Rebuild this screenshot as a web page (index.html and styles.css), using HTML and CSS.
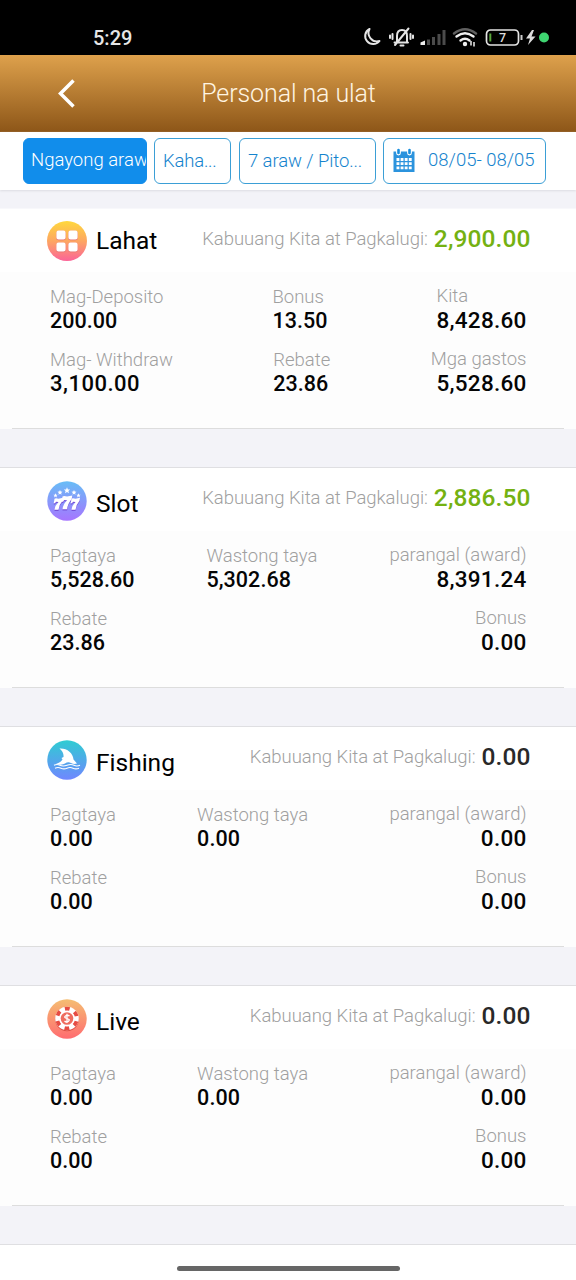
FILE: index.html
```html
<!DOCTYPE html>
<html lang="fil">
<head>
<meta charset="utf-8">
<title>Personal na ulat</title>
<link rel="stylesheet" href="styles.css">
</head>
<body>
<div class="screen">
  <div class="status">
    <span class="clock">5:29</span>
    <svg class="status-icons" width="190" height="24" viewBox="0 0 190 24">
      <path d="M7.500 4A8 8 0 1 0 17.500 16A8.500 8.500 0 0 1 7.500 4Z" fill="none" stroke="#e4e4e4" stroke-width="2" stroke-linejoin="round"/>
      <g fill="none" stroke="#e4e4e4" stroke-width="2" stroke-linecap="round">
        <path d="M32.500 17.500H46M35 17V11Q35 5 40 5T45 11V17M33 20L46.500 3.500M30.500 9V14M28 10.500V13M48.500 9V14M51 10.500V13M38.500 20.500H41.500"/>
      </g>
      <path d="M58.500 20V17.500L63 15.500V20Z" fill="#eee"/>
      <path d="M65 14.500H68V20H65ZM70 12H73V20H70ZM75.500 9H78.500V20H75.500ZM80.500 5H83.500V20H80.500Z" fill="#4b4b4b"/>
      <g fill="none" stroke-width="2.400" stroke-linecap="round">
        <path d="M92 8.500Q103 0 114 8.500" stroke="#606060"/>
        <path d="M94.500 11.500Q103 5 111.500 11.500M98.500 15.500Q103 12 107.500 15.500" stroke="#eee"/>
      </g>
      <circle cx="103" cy="19" r="2.200" fill="#eee"/>
      <path d="M109 16V20.500M112 17V21.500" stroke="#eee" stroke-width="1.500"/>
      <rect x="124.500" y="5" width="32" height="15" rx="4" fill="none" stroke="#e4e4e4" stroke-width="1.700"/>
      <path d="M128.300 8.500V16.500" stroke="#59a63c" stroke-width="2"/>
      <path d="M159.500 10V15" stroke="#ccc" stroke-width="2"/>
      <text x="137" y="17" class="battery-text">7</text>
      <path d="M170 5L164 13.500H168L166 20L173.500 11.500H169.500L172 5Z" fill="#ddd"/>
      <circle cx="182" cy="12.500" r="5" fill="#3fd571"/>
    </svg>
  </div>
  <header class="topbar">
    <svg class="back" width="20" height="32" viewBox="0 0 20 32"><path d="M17.500 2.500L4.500 15.500L17.500 28.500" fill="none" stroke="#fff" stroke-width="3.500"/></svg>
    <h1 class="title">Personal na ulat</h1>
  </header>
  <nav class="filters">
    <div class="chip chip-active">Ngayong araw</div>
    <div class="chip chip-type">Kaha...</div>
    <div class="chip chip-days">7 araw / Pito...</div>
    <div class="chip chip-date">
      <svg class="cal" width="22" height="25" viewBox="0 0 22 25">
        <path d="M0.500 3.500H21.500V24H0.500Z" fill="#2b93dd"/>
        <path d="M5.500 5V2M16.500 5V2" stroke="#fff" stroke-width="4.800" stroke-linecap="round"/>
        <path d="M5.500 5V2M16.500 5V2" stroke="#168ddd" stroke-width="2.600" stroke-linecap="round"/>
        <path d="M3.500 11.500H19M3.500 15.700H19M3.500 19.900H19" stroke="#fff" stroke-width="2.800" stroke-dasharray="2.900 1.200"/>
      </svg>
      <span>08/05- 08/05</span>
    </div>
  </nav>

  <section class="card card-first">
    <div class="card-head">
      <svg class="icon" width="40" height="40" viewBox="0 0 40 40">
        <defs><linearGradient id="ga" x1="0" y1="0" x2="0" y2="1"><stop offset="0" stop-color="#ffd83d"/><stop offset=".5" stop-color="#fda662"/><stop offset="1" stop-color="#fb6498"/></linearGradient></defs>
        <circle cx="20" cy="20" r="20" fill="url(#ga)"/>
        <path d="M11.500 12h5v5h-5zM23.500 12h5v5h-5zM11.500 24h5v5h-5zM23.500 24h5v5h-5z" fill="#e56e70" stroke="#e56e70" stroke-width="4.500" stroke-linejoin="round"/>
        <path d="M11.500 11.500h5v5h-5zM23.500 11.500h5v5h-5zM11.500 23.500h5v5h-5zM23.500 23.500h5v5h-5z" fill="#fff" stroke="#fff" stroke-width="4.200" stroke-linejoin="round"/>
      </svg>
      <h2 class="name">Lahat</h2>
      <div class="total"><span class="total-label">Kabuuang Kita at Pagkalugi:</span><span class="total-value gain">2,900.00</span></div>
    </div>
    <div class="card-body">
      <div class="row">
        <div class="cell"><span class="label">Mag-Deposito</span><span class="value">200.00</span></div>
        <div class="cell"><span class="label">Bonus</span><span class="value">13.50</span></div>
        <div class="cell cell-last cell-start"><span class="label">Kita</span><span class="value">8,428.60</span></div>
      </div>
      <div class="row">
        <div class="cell"><span class="label">Mag- Withdraw</span><span class="value value-wide">3,100.00</span></div>
        <div class="cell"><span class="label">Rebate</span><span class="value">23.86</span></div>
        <div class="cell cell-last"><span class="label">Mga gastos</span><span class="value">5,528.60</span></div>
      </div>
    </div>
  </section>

  <section class="card">
    <div class="card-head">
      <svg class="icon" width="40" height="40" viewBox="0 0 40 40">
        <defs><linearGradient id="gb" x1="0" y1="0" x2="0" y2="1"><stop offset="0" stop-color="#68bdf6"/><stop offset="1" stop-color="#a675ff"/></linearGradient>
        <path id="star" d="M0-3.200L.9-1.100L3.100-1L1.400.5L2 2.700L0 1.500L-2 2.700L-1.400.5L-3.100-1L-.9-1.100Z"/>
        <path id="seven" d="M0 0L1.500-.5L4 0L8.500-1L8 2Q4.500 6 4 11H0Q.500 6.500 4 3.200L1.500 3L.5 4.500H-.8Z"/></defs>
        <circle cx="20" cy="20" r="19.700" fill="url(#gb)"/>
        <g fill="#fff"><use href="#star" transform="translate(20 9.500)"/><use href="#star" transform="translate(13 11.500) scale(.8)"/><use href="#star" transform="translate(27 11.500) scale(.8)"/><use href="#star" transform="translate(8.500 14.500) scale(.7)"/><use href="#star" transform="translate(31.500 14.500) scale(.7)"/></g>
        <g fill="#7650d8"><use href="#seven" transform="translate(7.500 19)"/><use href="#seven" transform="translate(24.500 19)"/><use href="#seven" transform="translate(15.500 16.800) scale(1.150)"/></g>
        <g fill="#fff"><use href="#seven" transform="translate(7.500 17.800)"/><use href="#seven" transform="translate(24.500 17.800)"/><use href="#seven" transform="translate(15.500 15.600) scale(1.150)"/></g>
      </svg>
      <h2 class="name">Slot</h2>
      <div class="total"><span class="total-label">Kabuuang Kita at Pagkalugi:</span><span class="total-value gain">2,886.50</span></div>
    </div>
    <div class="card-body">
      <div class="row">
        <div class="cell"><span class="label">Pagtaya</span><span class="value">5,528.60</span></div>
        <div class="cell"><span class="label">Wastong taya</span><span class="value">5,302.68</span></div>
        <div class="cell cell-last"><span class="label">parangal (award)</span><span class="value">8,391.24</span></div>
      </div>
      <div class="row">
        <div class="cell"><span class="label">Rebate</span><span class="value">23.86</span></div>
        <div class="cell cell-last"><span class="label">Bonus</span><span class="value">0.00</span></div>
      </div>
    </div>
  </section>

  <section class="card">
    <div class="card-head">
      <svg class="icon" width="40" height="40" viewBox="0 0 40 40">
        <defs><linearGradient id="gc" x1="0" y1="0" x2="0" y2="1"><stop offset="0" stop-color="#2fccd2"/><stop offset="1" stop-color="#7087ff"/></linearGradient></defs>
        <circle cx="20" cy="20" r="19.700" fill="url(#gc)"/>
        <path d="M12.500 8.500C20 8 26 13 26.500 19.500L30 23.500Q27 24.500 24 23T18 23.500T9 24Q14 22 15.500 19.500L14.500 18L16.500 17Q17 12 12.500 8.500Z" fill="#fff"/>
        <path d="M7 25.300Q10 23.800 13 25.300T20 25.300T27 25.300T33 25.300M8 28.200Q11 26.800 14 28.200T20 28.200T26 28.200T32 28.200" fill="none" stroke="#fff" stroke-width="1.100"/>
      </svg>
      <h2 class="name">Fishing</h2>
      <div class="total"><span class="total-label">Kabuuang Kita at Pagkalugi:</span><span class="total-value">0.00</span></div>
    </div>
    <div class="card-body">
      <div class="row">
        <div class="cell"><span class="label">Pagtaya</span><span class="value">0.00</span></div>
        <div class="cell"><span class="label">Wastong taya</span><span class="value">0.00</span></div>
        <div class="cell cell-last"><span class="label">parangal (award)</span><span class="value">0.00</span></div>
      </div>
      <div class="row">
        <div class="cell"><span class="label">Rebate</span><span class="value">0.00</span></div>
        <div class="cell cell-last"><span class="label">Bonus</span><span class="value">0.00</span></div>
      </div>
    </div>
  </section>

  <section class="card">
    <div class="card-head">
      <svg class="icon" width="40" height="40" viewBox="0 0 40 40">
        <defs><linearGradient id="gd" x1="0" y1="0" x2="0" y2="1"><stop offset="0" stop-color="#f5bd72"/><stop offset="1" stop-color="#ff6c70"/></linearGradient></defs>
        <circle cx="20" cy="20" r="19.700" fill="url(#gd)"/>
        <circle cx="20" cy="20.500" r="11.800" fill="#d94b42"/>
        <circle cx="20" cy="19.500" r="11.800" fill="#fff"/>
        <circle cx="20" cy="19.500" r="9.900" fill="none" stroke="#e64c43" stroke-width="3.800" stroke-dasharray="4.800 5.567" stroke-dashoffset="-2.780"/>
        <circle cx="20" cy="19.500" r="6.300" fill="#ef6d5f"/>
        <path d="M22.500 17Q20.500 15.500 18.500 17T20 19.500T21.500 22.200T17.500 22M20 14.800V24" fill="none" stroke="#fff" stroke-width="1.300"/>
      </svg>
      <h2 class="name">Live</h2>
      <div class="total"><span class="total-label">Kabuuang Kita at Pagkalugi:</span><span class="total-value">0.00</span></div>
    </div>
    <div class="card-body">
      <div class="row">
        <div class="cell"><span class="label">Pagtaya</span><span class="value">0.00</span></div>
        <div class="cell"><span class="label">Wastong taya</span><span class="value">0.00</span></div>
        <div class="cell cell-last"><span class="label">parangal (award)</span><span class="value">0.00</span></div>
      </div>
      <div class="row">
        <div class="cell"><span class="label">Rebate</span><span class="value">0.00</span></div>
        <div class="cell cell-last"><span class="label">Bonus</span><span class="value">0.00</span></div>
      </div>
    </div>
  </section>

  <footer class="home"><div class="home-bar"></div></footer>
</div>
</body>
</html>
```
FILE: styles.css
```css
* { box-sizing: border-box; }
body { margin: 0; background: #f3f3f8; font-family: Roboto, "Liberation Sans", sans-serif; }
.screen { width: 576px; height: 1280px; overflow: hidden; display: flex; flex-direction: column; }
.screen > * { flex-shrink: 0; }
.status { height: 55px; background: #000; display: flex; align-items: flex-start; justify-content: space-between; padding: 25px 20px 0 93px; }
.clock { color: #e6e6e6; font-size: 20px; line-height: 26px; font-weight: 500; }
.status-icons { margin-right: 4px; width: 190px; }
.battery-text { font: 500 12.500px Roboto, sans-serif; fill: #ddd; }
.topbar { height: 77px; background: linear-gradient(#dea14c, #8d5618); display: flex; align-items: center; padding-left: 56px; }
.title { flex: 1; margin: 0 75px 0 0; text-align: center; color: #fff5e2; font-size: 25px; font-weight: 300; letter-spacing: -.1px; }
.filters { height: 58px; background: #fff; padding: 6px 0 0 23px; display: flex; gap: 7px; box-shadow: 0 1px 2px #dcdce2; }
.chip { height: 46px; border: 1px solid #3b9fd6; border-radius: 6px; padding: 0 0 0 8px; font-size: 18.500px; line-height: 44px; font-weight: 300; letter-spacing: -.1px; color: #1583cd; white-space: nowrap; overflow: hidden; }
.chip-active { width: 124px; background: #118deb; border-color: #118deb; color: #fff; padding-left: 7px; line-height: 43px; letter-spacing: 0; }
.chip-type { width: 77px; letter-spacing: -.2px; }
.chip-days { width: 137px; margin-left: 1px; }
.chip-date { width: 163px; display: flex; align-items: center; gap: 13px; line-height: 42px; padding: 0 0 2px 9px; letter-spacing: 0; }
.card { height: 221px; margin-top: 38px; border-top: 1px solid #dfdfe2; background: #fff; }
.card-first { margin-top: 18px; border-top-color: #f8f8fb; }
.card-head { height: 63px; display: flex; padding: 13px 45.500px 0 47px; }
.card-first .card-head { padding-top: 12px; }
.icon { flex: none; }
.name { margin: 7px 0 0 9px; font-size: 24.500px; line-height: 32px; font-weight: 400; color: #000; letter-spacing: 0; }
.card-first .name { margin-top: 4px; }
.total { margin-left: auto; display: flex; align-items: flex-start; gap: 6px; height: 36px; white-space: nowrap; }
.total-label { color: #a0a0a0; font-size: 18.500px; line-height: 35px; font-weight: 300; letter-spacing: -.04px; }
.total-value { color: #292929; font-size: 24.500px; line-height: 34px; font-weight: 500; letter-spacing: .1px; }
.card-first .total { padding-top: 1px; }
.gain { color: #74b112; }
.card-body { height: 157px; background: linear-gradient(#ddd, #ddd) 12px 156px / 552px 1px no-repeat #fdfdfd; padding: 13px 49.500px 0 50px; }
.row { height: 63px; display: flex; justify-content: space-between; }
.cell { display: flex; flex-direction: column; align-items: flex-start; }
.cell-last { align-items: flex-end; }
.cell-start { align-items: flex-start; }
.label { color: #a0a0a0; font-size: 18.500px; line-height: 24px; font-weight: 300; letter-spacing: 0; white-space: nowrap; }
.value { color: #050505; font-size: 21.500px; line-height: 23px; font-weight: 500; letter-spacing: .05px; }
.value-wide { font-size: 22px; letter-spacing: .5px; }
.cell-last .label { line-height: 23px; }
.cell-last .value { font-size: 22.500px; line-height: 25px; letter-spacing: .25px; }
.home { height: 36px; margin-top: 38px; border-top: 1px solid #dfdfe2; background: #fff; padding-top: 21px; }
.home-bar { width: 223px; height: 5px; margin-left: 176.500px; border-radius: 3px; background: #666; }
```
